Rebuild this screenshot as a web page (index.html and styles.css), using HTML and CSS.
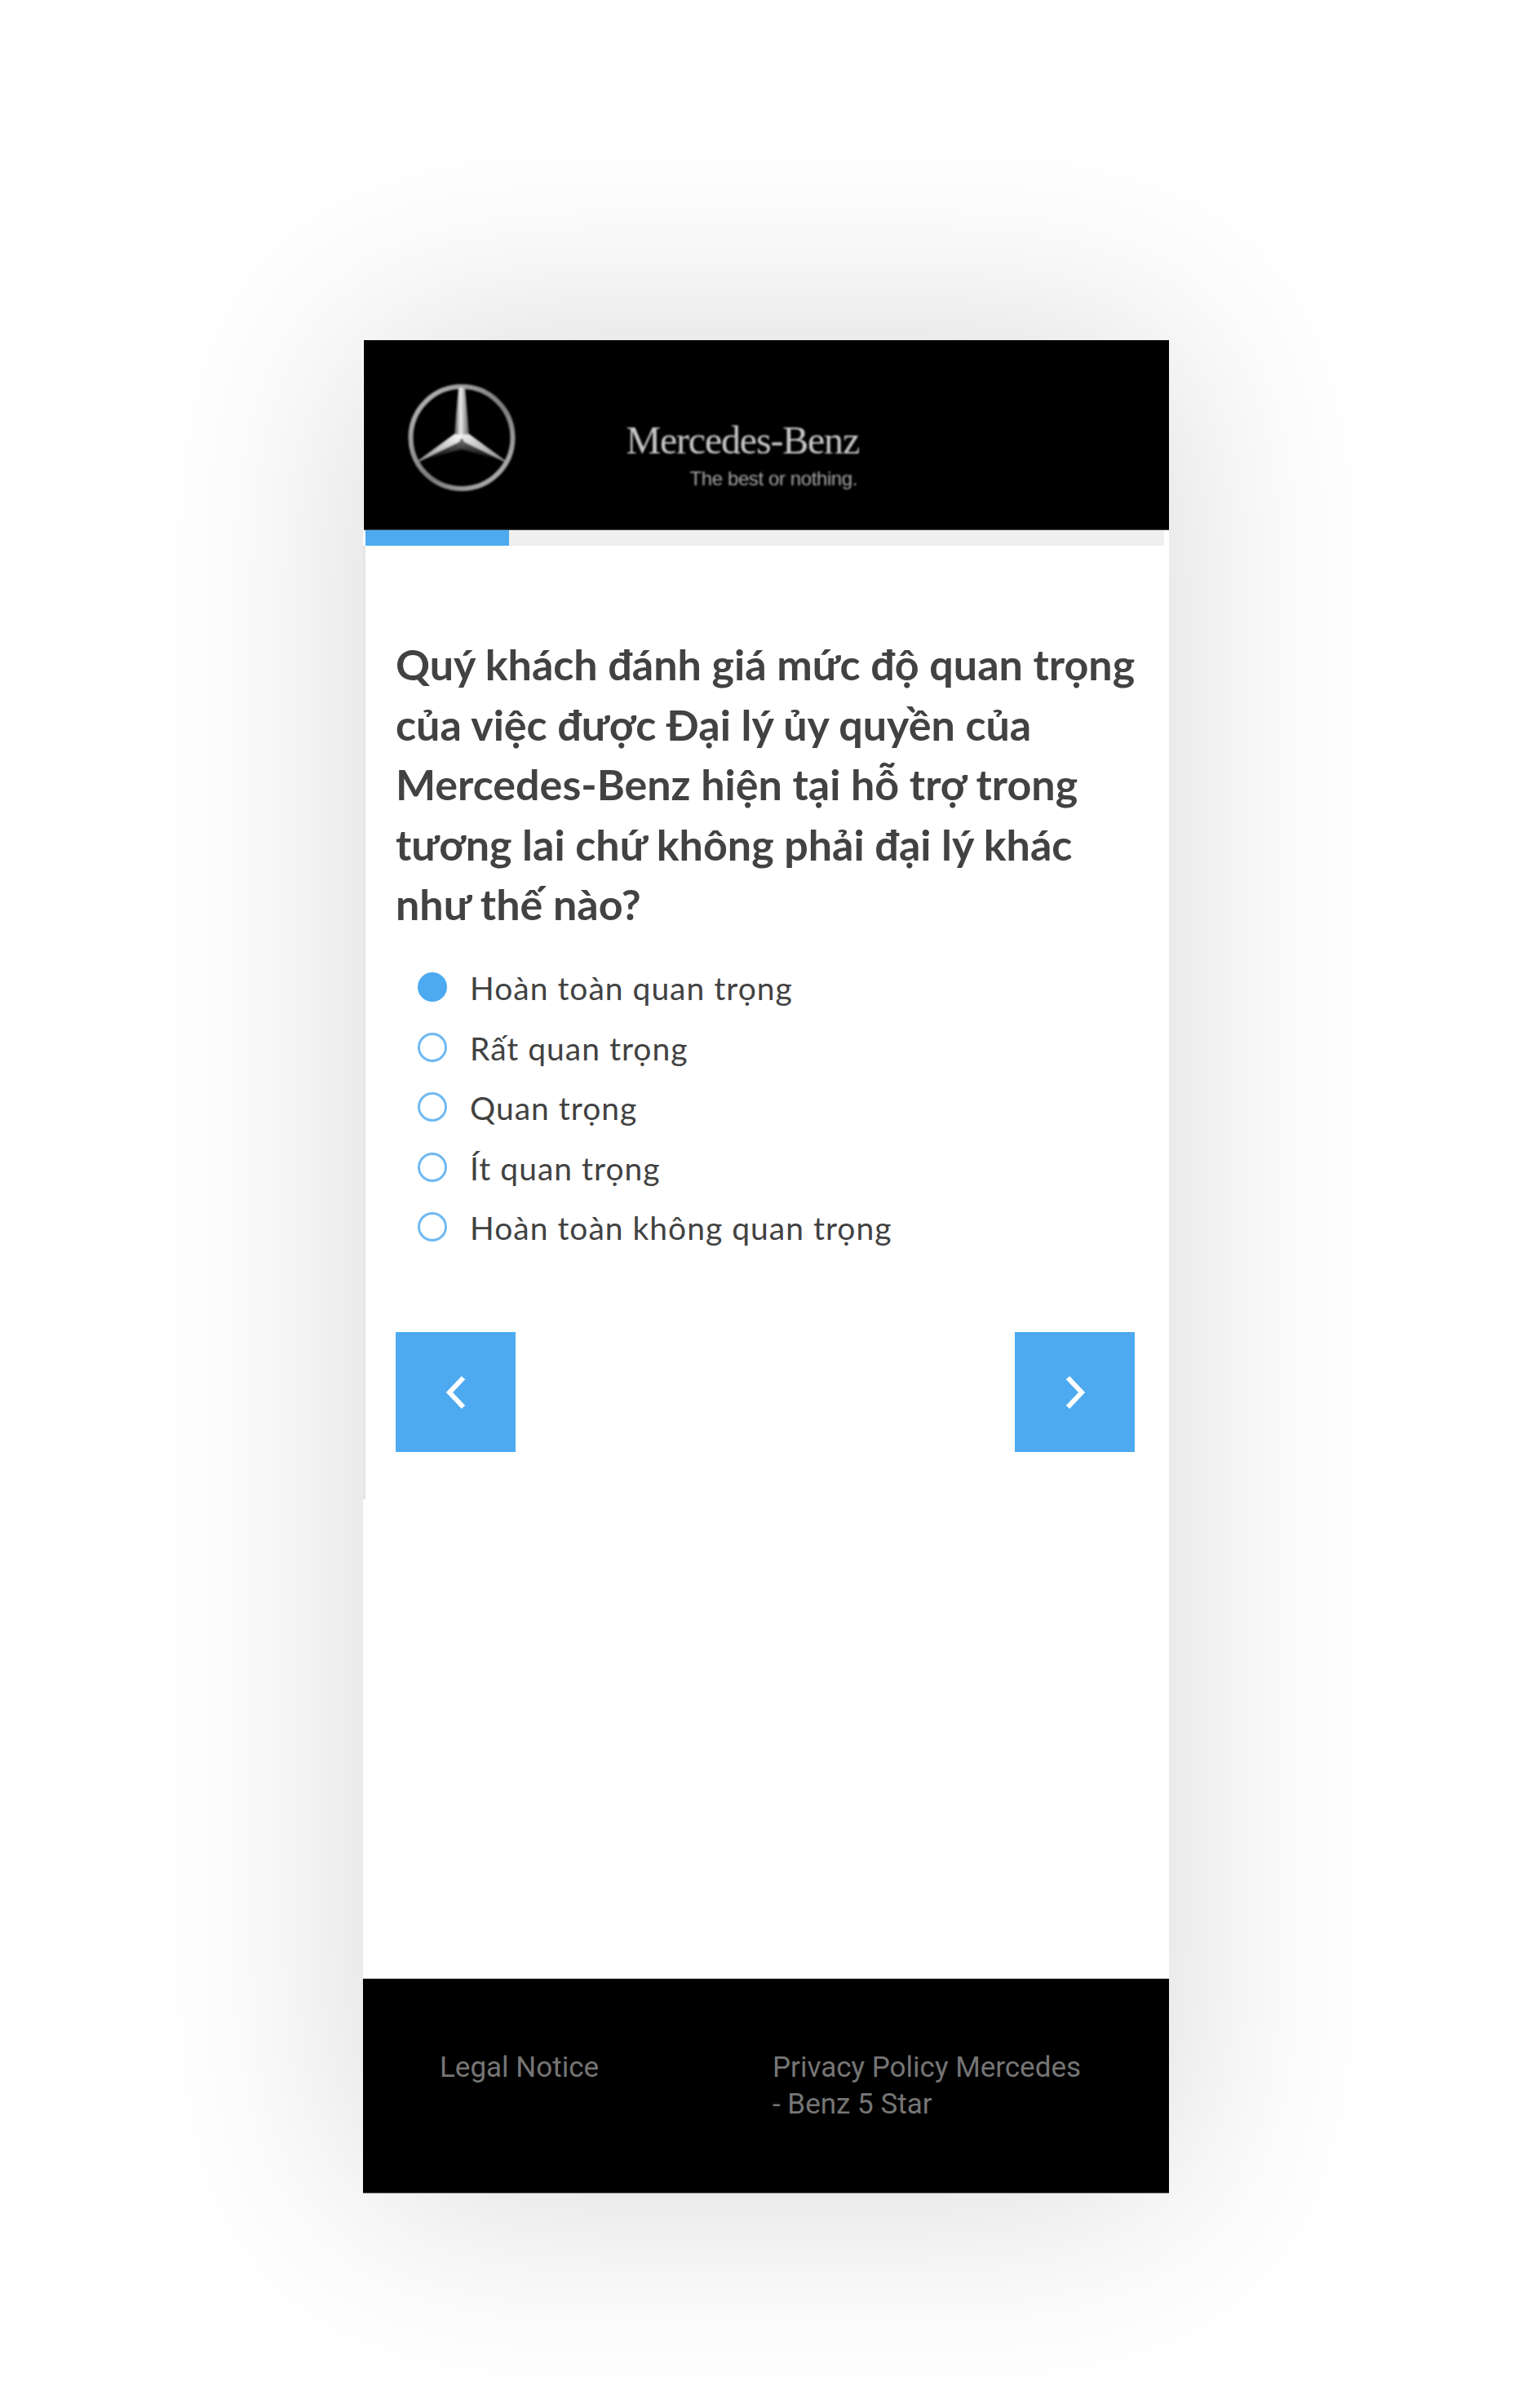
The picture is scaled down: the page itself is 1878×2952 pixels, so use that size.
FILE: index.html
```html
<!DOCTYPE html>
<html lang="vi">
<head>
<meta charset="utf-8">
<title>Mercedes-Benz</title>
<link rel="stylesheet" href="styles.css">
</head>
<body>
<main class="card">
  <header class="brand">
    <svg class="star" viewBox="0 0 134 134" aria-hidden="true">
      <defs>
        <linearGradient id="ring" x1="0" y1="0" x2="1" y2="1">
          <stop offset="0" stop-color="#bdbdbd"/>
          <stop offset=".3" stop-color="#9a9a9a"/>
          <stop offset=".55" stop-color="#7d7d7d"/>
          <stop offset="1" stop-color="#bcbcbc"/>
        </linearGradient>
        <linearGradient id="armTop" x1="0" y1="0" x2="1" y2="0">
          <stop offset="0" stop-color="#4a4a4a"/>
          <stop offset=".42" stop-color="#ededed"/>
          <stop offset=".7" stop-color="#a8a8a8"/>
          <stop offset="1" stop-color="#5a5a5a"/>
        </linearGradient>
        <linearGradient id="armLeft" x1="0" y1="1" x2="1" y2="0">
          <stop offset="0" stop-color="#8a8a8a"/>
          <stop offset="1" stop-color="#fbfbfb"/>
        </linearGradient>
        <linearGradient id="armRight" x1="1" y1="1" x2="0" y2="0">
          <stop offset="0" stop-color="#8a8a8a"/>
          <stop offset="1" stop-color="#f0f0f0"/>
        </linearGradient>
        <linearGradient id="armDark" x1="0" y1="0" x2="0" y2="1">
          <stop offset="0" stop-color="#7a7a7a"/>
          <stop offset=".6" stop-color="#2a2a2a"/>
          <stop offset="1" stop-color="#0c0c0c"/>
        </linearGradient>
      </defs>
      <ellipse class="star-ring" cx="67" cy="66.500" rx="62.500" ry="62.500" stroke="url(#ring)"/>
      <path d="M63 5 L71 5 L76 62 L67 68 L58 62 Z" fill="url(#armTop)"/>
      <path d="M67 67 L64 72 L14 95 L67 81 L120 95 L70 72 Z" fill="url(#armDark)"/>
      <path d="M58 62 L13 95 L15 96 L64 72 L67 67 L67 63 Z" fill="url(#armLeft)"/>
      <path d="M76 62 L121 95 L119 96 L70 72 L67 67 L67 63 Z" fill="url(#armRight)"/>
    </svg>
    <div class="wordmark">
      <span class="wordmark-name">Mercedes-Benz</span>
      <span class="wordmark-tag">The best or nothing.</span>
    </div>
  </header>
  <div class="progress"><div class="progress-fill"></div></div>
  <section class="survey">
    <div class="survey-panel">
      <h1 class="question">Quý khách đánh giá mức độ quan trọng<br>của việc được Đại lý ủy quyền của<br>Mercedes-Benz hiện tại hỗ trợ trong<br>tương lai chứ không phải đại lý khác<br>như thế nào?</h1>
      <ul class="options">
        <li class="option"><span class="radio radio-on"></span>Hoàn toàn quan trọng</li>
        <li class="option"><span class="radio"></span>Rất quan trọng</li>
        <li class="option"><span class="radio"></span>Quan trọng</li>
        <li class="option"><span class="radio"></span>Ít quan trọng</li>
        <li class="option"><span class="radio"></span>Hoàn toàn không quan trọng</li>
      </ul>
      <nav class="pager">
        <button class="pager-btn" type="button" aria-label="Trước">
          <svg viewBox="0 0 26 42" class="chevron"><path d="M22 3 L5 21 L22 39" /></svg>
        </button>
        <button class="pager-btn" type="button" aria-label="Tiếp">
          <svg viewBox="0 0 26 42" class="chevron"><path d="M4 3 L21 21 L4 39" /></svg>
        </button>
      </nav>
    </div>
  </section>
  <footer class="legal">
    <a class="legal-link legal-first">Legal Notice</a>
    <a class="legal-link legal-second">Privacy Policy Mercedes<br>- Benz 5 Star</a>
  </footer>
</main>
</body>
</html>
```

FILE: styles.css
```css
html, body {
  margin: 0;
  padding: 0;
  background: #fff;
}
body {
  height: 2952px;
  overflow: hidden;
  padding-top: 417px;
  padding-left: 445px;
  box-sizing: border-box;
}
.card {
  width: 988px;
  height: 2272px;
  display: flex;
  flex-direction: column;
  background: #fff;
  box-shadow: 0 0 300px rgba(0, 0, 0, .16);
}
.brand {
  height: 233px;
  flex: none;
  margin-left: 1px;
  background: #000;
  border-bottom: 1px solid #4a4a4a;
  display: flex;
  align-items: flex-start;
  padding-left: 53px;
  box-sizing: border-box;
}
.star {
  width: 134px;
  height: 134px;
  margin-top: 53px;
  flex: none;
  filter: blur(.9px);
}
.star-ring {
  fill: none;
  stroke-width: 6;
}
.wordmark {
  margin-left: 138px;
  margin-top: 95px;
  width: 282px;
  display: flex;
  flex-direction: column;
  align-items: flex-end;
  filter: blur(.8px);
  font-family: "Liberation Serif", serif;
}
.wordmark-name {
  font-size: 48px;
  line-height: 56px;
  color: #c8c8c8;
  letter-spacing: -1.200px;
  white-space: nowrap;
}
.wordmark-tag {
  font-family: "Liberation Sans", sans-serif;
  font-size: 24px;
  line-height: 28px;
  margin-top: 5px;
  margin-right: 2px;
  color: #a6a6a6;
  letter-spacing: -.400px;
  white-space: nowrap;
}
.progress {
  height: 19px;
  flex: none;
  background: #efefef;
  margin-left: 3px;
  margin-right: 6px;
}
.progress-fill {
  width: 176px;
  height: 100%;
  background: #4daaf0;
}
.survey {
  flex: 1;
  color: #424242;
  font-family: Lato, sans-serif;
}
.survey-panel {
  height: 1169px;
  box-sizing: border-box;
  border-left: 3px solid #e6e6e6;
  padding: 109px 42px 0 37px;
}
.question {
  margin: 0;
  font-size: 52px;
  line-height: 73.500px;
  font-weight: 700;
  letter-spacing: 0;
  white-space: nowrap;
}
.options {
  list-style: none;
  margin: 29px 0 0;
  padding: 0 0 0 27px;
}
.option {
  height: 73.500px;
  display: flex;
  align-items: center;
  font-size: 39px;
  letter-spacing: 1px;
}
.radio {
  width: 36px;
  height: 36px;
  border: 3px solid #6fb9f2;
  border-radius: 50%;
  box-sizing: border-box;
  margin-right: 28px;
  flex: none;
  position: relative;
  top: -1px;
}
.radio-on {
  background: #4daaf0;
  border-color: #4daaf0;
}
.pager {
  display: flex;
  justify-content: space-between;
  margin-top: 91px;
}
.pager-btn {
  width: 147px;
  height: 147px;
  border: 0;
  padding: 0;
  background: #4daaf0;
  display: flex;
  align-items: center;
  justify-content: center;
}
.chevron {
  width: 26px;
  height: 42px;
}
.chevron path {
  fill: none;
  stroke: #fff;
  stroke-width: 6;
}
.legal {
  height: 264px;
  flex: none;
  background: #000;
  border-top: 1px solid #bdbdbd;
  border-bottom: 1px solid #777;
  display: flex;
  padding-top: 86px;
  padding-left: 94px;
  box-sizing: border-box;
  color: #757575;
  font-family: Roboto, sans-serif;
  font-size: 35px;
  line-height: 45px;
}
.legal-first {
  width: 408px;
  flex: none;
}
.legal-second {
  flex: none;
}
```
